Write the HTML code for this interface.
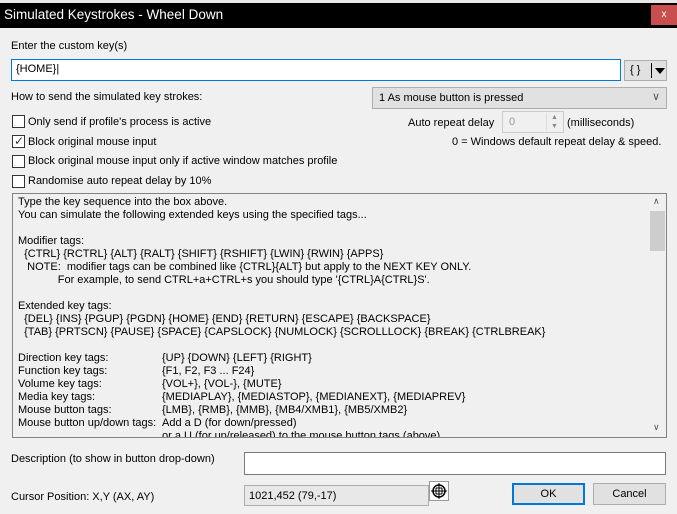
<!DOCTYPE html><html><head><style>
*{margin:0;padding:0;box-sizing:border-box}
body{width:677px;height:514px;background:#f0f0f0;font:11px "Liberation Sans",sans-serif;color:#000;position:relative;overflow:hidden}
.a{position:absolute;white-space:nowrap}
.cb{position:absolute;width:13px;height:13px;border:1px solid #333;background:#fff}
.ln{position:absolute;left:5px;white-space:pre;line-height:13px}
</style></head><body>
<div class="a" style="left:0;top:0;width:677px;height:3px;background:#e8e8e8"></div>
<div class="a" style="left:0;top:3px;width:677px;height:25px;background:#000"></div>
<div class="a" style="left:4px;top:7px;color:#fff;font-size:13.5px">Simulated Keystrokes - Wheel Down</div>
<div class="a" style="left:651px;top:5px;width:26px;height:20px;background:#c94f4f;color:#fff;text-align:center;font-size:10px;line-height:19px">x</div>
<div class="a" style="left:11px;top:40px">Enter the custom key(s)</div>
<div class="a" style="left:11px;top:59px;width:610px;height:22px;border:1px solid #0078d7;background:#fff;padding:3px 4px">{HOME}|</div>
<div class="a" style="left:624px;top:60px;width:43px;height:21px;border:1px solid #adadad;background:#e1e1e1"><span style="position:absolute;left:5px;top:3px">{ }</span><span style="position:absolute;left:26px;top:2px;width:1px;height:15px;background:#000"></span><span style="position:absolute;left:30px;top:7px;border-left:5px solid transparent;border-right:5px solid transparent;border-top:6px solid #000"></span></div>
<div class="a" style="left:11px;top:91px">How to send the simulated key strokes:</div>
<div class="a" style="left:372px;top:87px;width:295px;height:22px;border:1px solid #adadad;background:#e1e1e1;padding:4px 6px">1 As mouse button is pressed<span style="position:absolute;right:6px;top:2px;color:#555">&#x2228;</span></div>
<div class="cb" style="left:12px;top:115px"></div><div class="a" style="left:28px;top:116px">Only send if profile's process is active</div>
<div class="cb" style="left:12px;top:135px"></div><div class="a" style="left:14px;top:134px;font-size:12px;color:#333">&#x2713;</div><div class="a" style="left:28px;top:136px">Block original mouse input</div>
<div class="cb" style="left:12px;top:155px"></div><div class="a" style="left:28px;top:155px">Block original mouse input only if active window matches profile</div>
<div class="cb" style="left:12px;top:175px"></div><div class="a" style="left:28px;top:175px">Randomise auto repeat delay by 10%</div>
<div class="a" style="left:408px;top:117px">Auto repeat delay</div>
<div class="a" style="left:502px;top:111px;width:62px;height:22px;border:1px solid #ccc;background:#f0f0f0;color:#999;padding:4px 6px">0<span style="position:absolute;right:1px;top:1px;width:16px;height:18px;border-left:1px solid #ddd;font-size:7px;line-height:9px;text-align:center;color:#888">&#9650;<br>&#9660;</span></div>
<div class="a" style="left:567px;top:117px">(milliseconds)</div>
<div class="a" style="left:452px;top:136px">0 = Windows default repeat delay &amp; speed.</div>
<div class="a" style="left:12px;top:193px;width:655px;height:245px;border:1px solid #828282;background:#f0f0f0;overflow:hidden">
<div class="a" style="right:0;top:0;width:17px;height:243px;background:#f0f0f0"><div class="a" style="left:1px;top:17px;width:15px;height:40px;background:#cdcdcd"></div><div class="a" style="left:4px;top:2px;font-size:9px;color:#555">&#x2227;</div><div class="a" style="left:4px;top:228px;font-size:9px;color:#555">&#x2228;</div></div>
<div class="ln" style="top:2px">Type the key sequence into the box above.
You can simulate the following extended keys using the specified tags...

Modifier tags:
  {CTRL} {RCTRL} {ALT} {RALT} {SHIFT} {RSHIFT} {LWIN} {RWIN} {APPS}
   NOTE:  modifier tags can be combined like {CTRL}{ALT} but apply to the NEXT KEY ONLY.
             For example, to send CTRL+a+CTRL+s you should type '{CTRL}A{CTRL}S'.

Extended key tags:
  {DEL} {INS} {PGUP} {PGDN} {HOME} {END} {RETURN} {ESCAPE} {BACKSPACE}
  {TAB} {PRTSCN} {PAUSE} {SPACE} {CAPSLOCK} {NUMLOCK} {SCROLLLOCK} {BREAK} {CTRLBREAK}
</div>
<div class="ln" style="top:158px">Direction key tags:
Function key tags:
Volume key tags:
Media key tags:
Mouse button tags:
Mouse button up/down tags:</div>
<div class="ln" style="top:158px;left:149px">{UP} {DOWN} {LEFT} {RIGHT}
{F1, F2, F3 ... F24}
{VOL+}, {VOL-}, {MUTE}
{MEDIAPLAY}, {MEDIASTOP}, {MEDIANEXT}, {MEDIAPREV}
{LMB}, {RMB}, {MMB}, {MB4/XMB1}, {MB5/XMB2}
Add a D (for down/pressed)
or a U (for up/released) to the mouse button tags (above)</div>
</div>
<div class="a" style="left:11px;top:453px">Description (to show in button drop-down)</div>
<div class="a" style="left:244px;top:452px;width:422px;height:23px;border:1px solid #7a7a7a;background:#fff"></div>
<div class="a" style="left:11px;top:491px">Cursor Position: X,Y (AX, AY)</div>
<div class="a" style="left:244px;top:485px;width:185px;height:21px;border:1px solid #adadad;background:#e8e8e8;padding:4px 4px">1021,452 (79,-17)</div>
<div class="a" style="left:429px;top:481px;width:20px;height:20px;border:1px solid #999;background:#fff"><svg width="18" height="18" viewBox="0 0 18 18"><circle cx="9" cy="9" r="6" fill="none" stroke="#000" stroke-width="1.5"/><path d="M9 1v16M1 9h16M6 6h6M6 12h6M6 6v6M12 6v6" stroke="#000"/></svg></div>
<div class="a" style="left:512px;top:483px;width:73px;height:22px;border:2px solid #0078d7;background:#e1e1e1;text-align:center;line-height:18px">OK</div>
<div class="a" style="left:593px;top:483px;width:73px;height:22px;border:1px solid #adadad;background:#e1e1e1;text-align:center;line-height:20px">Cancel</div>
</body></html>
